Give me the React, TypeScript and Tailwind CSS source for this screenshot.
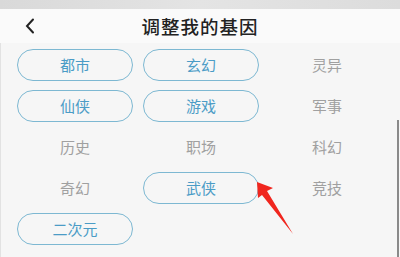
import React from "react";

const tags = [
  { name: "都市", on: true },
  { name: "玄幻", on: true },
  { name: "灵异", on: false },
  { name: "仙侠", on: true },
  { name: "游戏", on: true },
  { name: "军事", on: false },
  { name: "历史", on: false },
  { name: "职场", on: false },
  { name: "科幻", on: false },
  { name: "奇幻", on: false },
  { name: "武侠", on: true },
  { name: "竞技", on: false },
  { name: "二次元", on: true },
];

export default function App() {
  return (
    <div
      className="relative w-[400px] h-[257px] overflow-hidden bg-[#f6f6f6]"
      style={{ fontFamily: '"Noto Sans CJK SC", "Noto Sans", sans-serif' }}
    >
      {/* status bar blur */}
      <div className="h-[9px] bg-gradient-to-r from-[#d9d9d9] via-[#e4e4e4] to-[#dcdcdc]" />

      {/* header */}
      <div className="relative h-[34px] flex items-center justify-center bg-[#fafafa]">
        <svg className="absolute left-[24px] top-[9px]" width="12" height="16" viewBox="0 0 12 16">
          <path d="M9 1.5 L3 8 L9 14.5" fill="none" stroke="#222" strokeWidth="2" strokeLinecap="round" />
        </svg>
        <span className="text-[18.5px] leading-none text-[#222] font-medium tracking-[1px]">调整我的基因</span>
      </div>

      {/* tags */}
      <div className="grid grid-cols-[116px_116px_116px] gap-x-[10px] gap-y-[9px] pl-[17px] pt-[6px]">
        {tags.map((t) => (
          <div
            key={t.name}
            className={
              t.on
                ? "h-[32px] flex items-center justify-center rounded-full border-[1.5px] border-[#7db8d2] text-[15px] text-[#4b9cc6]"
                : "h-[32px] flex items-center justify-center text-[15px] text-[#a0a0a0]"
            }
          >
            {t.name}
          </div>
        ))}
      </div>

      {/* scroll bar */}
      <div className="absolute right-[1px] top-[120px] bottom-0 w-[2px] bg-[#8a8a8a]" />
      <div className="absolute left-0 top-[43px] bottom-0 w-[1px] bg-[#e2e2e2]" />

      {/* red arrow */}
      <svg className="absolute left-0 top-0" width="400" height="257" viewBox="0 0 400 257">
        <polygon points="257,182 273,188 267,191 293,234 262,195 258,198" fill="#f0261e" />
      </svg>
    </div>
  );
}
